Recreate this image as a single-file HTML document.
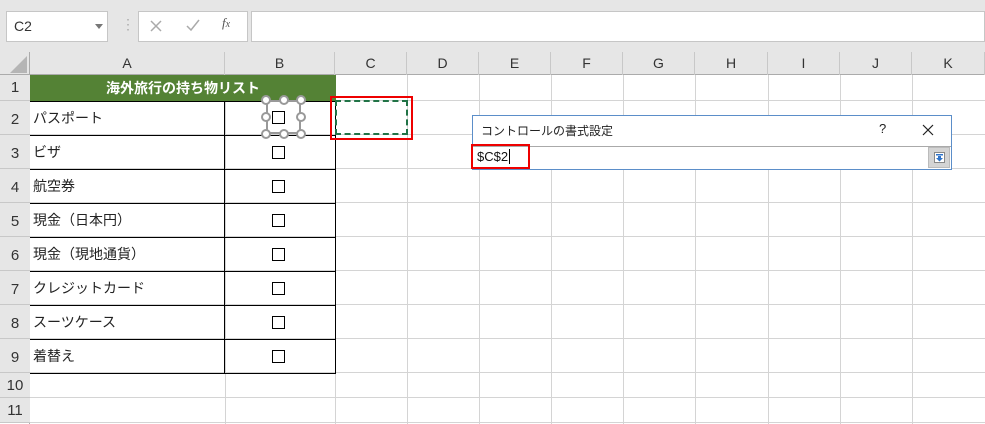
<!DOCTYPE html><html><head><meta charset="utf-8"><style>
*{margin:0;padding:0;box-sizing:border-box}
body{width:985px;height:424px;overflow:hidden;background:#fff;position:relative;font-family:"Liberation Sans","Noto Sans CJK JP",sans-serif;color:#222}
.a{position:absolute}
.vl{position:absolute;top:75px;height:349px;width:1px;background:#d4d4d4}
.hl{position:absolute;left:30px;width:955px;height:1px;background:#d4d4d4}
.ch{position:absolute;top:52px;height:23px;font-size:14px;color:#333;text-align:center;line-height:23px;border-right:1px solid #c8c8c8}
.rh{position:absolute;left:0;width:30px;font-size:15px;color:#333;text-align:center;border-bottom:1px solid #c8c8c8;background:#e6e6e6}
.t{position:absolute;left:33px;font-size:14px;color:#222}
.cb{position:absolute;left:272px;width:13px;height:13px;border:1px solid #000;background:#fff}
.bh{position:absolute;left:30px;width:306px;height:1px;background:#000}
.hd{position:absolute;width:10px;height:10px;border:2px solid #999;border-radius:50%;background:#fff}
</style></head><body>
<div class="a" style="left:0;top:0;width:985px;height:52px;background:#e6e6e6"></div>
<div class="a" style="left:6px;top:11px;width:102px;height:31px;background:#fff;border:1px solid #c6c6c6;font-size:14px;line-height:29px;padding-left:7px;color:#333">C2<span style="position:absolute;left:88px;top:12px;border:4px solid transparent;border-top:5px solid #777"></span></div>
<div class="a" style="left:121px;top:16px;color:#aaa;font-size:14px">⋮</div>
<div class="a" style="left:138px;top:11px;width:110px;height:31px;background:#fff;border:1px solid #c6c6c6"></div>
<svg class="a" style="left:150px;top:20px" width="12" height="12"><path d="M1 1L11 11M11 1L1 11" stroke="#aaa" stroke-width="1.5"/></svg>
<svg class="a" style="left:186px;top:19px" width="14" height="13"><path d="M1 7L5 11L13 1" stroke="#aaa" stroke-width="1.5" fill="none"/></svg>
<div class="a" style="left:222px;top:15px;color:#555;font-size:13px;font-style:italic;font-family:'Liberation Serif',serif">f<span style="font-size:10px">x</span></div>
<div class="a" style="left:251px;top:11px;width:734px;height:31px;background:#fff;border:1px solid #c6c6c6"></div>
<div class="a" style="left:0;top:52px;width:985px;height:23px;background:#e6e6e6;border-bottom:1px solid #ababab"></div>
<div class="a" style="left:10px;top:56px;width:0;height:0;border-left:17px solid transparent;border-bottom:17px solid #b5b5b5"></div>
<div class="ch" style="left:30px;width:195px">A</div><div class="ch" style="left:225px;width:110px">B</div><div class="ch" style="left:335px;width:72px">C</div><div class="ch" style="left:407px;width:72px">D</div><div class="ch" style="left:479px;width:72px">E</div><div class="ch" style="left:551px;width:72px">F</div><div class="ch" style="left:623px;width:72px">G</div><div class="ch" style="left:695px;width:73px">H</div><div class="ch" style="left:768px;width:72px">I</div><div class="ch" style="left:840px;width:72px">J</div><div class="ch" style="left:912px;width:73px">K</div>
<div class="a" style="left:29px;top:52px;width:1px;height:372px;background:#ababab"></div>
<div class="rh" style="top:75px;height:26px;line-height:26px">1</div>
<div class="rh" style="top:101px;height:34px;line-height:38px">2</div>
<div class="rh" style="top:135px;height:34px;line-height:38px">3</div>
<div class="rh" style="top:169px;height:34px;line-height:38px">4</div>
<div class="rh" style="top:203px;height:34px;line-height:38px">5</div>
<div class="rh" style="top:237px;height:34px;line-height:38px">6</div>
<div class="rh" style="top:271px;height:34px;line-height:38px">7</div>
<div class="rh" style="top:305px;height:34px;line-height:38px">8</div>
<div class="rh" style="top:339px;height:34px;line-height:38px">9</div>
<div class="rh" style="top:373px;height:25px;line-height:25px">10</div>
<div class="rh" style="top:398px;height:25px;line-height:25px">11</div>
<div class="vl" style="left:225px"></div><div class="vl" style="left:335px"></div><div class="vl" style="left:407px"></div><div class="vl" style="left:479px"></div><div class="vl" style="left:551px"></div><div class="vl" style="left:623px"></div><div class="vl" style="left:695px"></div><div class="vl" style="left:768px"></div><div class="vl" style="left:840px"></div><div class="vl" style="left:912px"></div>
<div class="hl" style="top:100px"></div><div class="hl" style="top:134px"></div><div class="hl" style="top:168px"></div><div class="hl" style="top:202px"></div><div class="hl" style="top:236px"></div><div class="hl" style="top:270px"></div><div class="hl" style="top:304px"></div><div class="hl" style="top:338px"></div><div class="hl" style="top:372px"></div><div class="hl" style="top:397px"></div><div class="hl" style="top:422px"></div>
<div class="a" style="left:30px;top:75px;width:306px;height:26px;background:#548235;color:#fff;font-weight:bold;font-size:14px;text-align:center;line-height:26px">海外旅行の持ち物リスト</div>
<div class="bh" style="top:101px"></div><div class="bh" style="top:135px"></div><div class="bh" style="top:169px"></div><div class="bh" style="top:203px"></div><div class="bh" style="top:237px"></div><div class="bh" style="top:271px"></div><div class="bh" style="top:305px"></div><div class="bh" style="top:339px"></div><div class="bh" style="top:373px"></div>
<div class="a" style="left:224px;top:101px;width:1px;height:273px;background:#000"></div>
<div class="a" style="left:335px;top:101px;width:1px;height:273px;background:#000"></div>
<div class="t" style="top:108px">パスポート</div><div class="t" style="top:142px">ビザ</div><div class="t" style="top:176px">航空券</div><div class="t" style="top:210px">現金（日本円）</div><div class="t" style="top:244px">現金（現地通貨）</div><div class="t" style="top:278px">クレジットカード</div><div class="t" style="top:312px">スーツケース</div><div class="t" style="top:346px">着替え</div>
<div class="cb" style="top:111px"></div><div class="cb" style="top:146px"></div><div class="cb" style="top:180px"></div><div class="cb" style="top:214px"></div><div class="cb" style="top:248px"></div><div class="cb" style="top:282px"></div><div class="cb" style="top:316px"></div><div class="cb" style="top:350px"></div>
<div class="a" style="left:266px;top:100px;width:35px;height:34px;border:2px solid #999"></div>
<div class="hd" style="left:261px;top:95px"></div><div class="hd" style="left:279px;top:95px"></div><div class="hd" style="left:296px;top:95px"></div>
<div class="hd" style="left:261px;top:112px"></div><div class="hd" style="left:296px;top:112px"></div>
<div class="hd" style="left:261px;top:129px"></div><div class="hd" style="left:279px;top:129px"></div><div class="hd" style="left:296px;top:129px"></div>
<div class="cb" style="top:111px"></div>
<div class="a" style="left:335px;top:100px;width:73px;height:35px;border:2px dashed #217346"></div>
<div class="a" style="left:330px;top:96px;width:83px;height:44px;border:2px solid #e00"></div>
<div class="a" style="left:472px;top:115px;width:480px;height:55px;background:#fff;border:1px solid #5b8ec9"></div>
<div class="a" style="left:481px;top:122px;font-size:12px;color:#222">コントロールの書式設定</div>
<div class="a" style="left:879px;top:121px;font-size:13px;color:#222">?</div>
<svg class="a" style="left:922px;top:124px" width="12" height="12"><path d="M1 1L11 11M11 1L1 11" stroke="#222" stroke-width="1.2"/></svg>
<div class="a" style="left:473px;top:146px;width:478px;height:23px;border-top:1px solid #aaa;background:#fff"></div>
<div class="a" style="left:477px;top:149px;font-size:13px;color:#111">$C$2<span style="border-left:1px solid #000;margin-left:1px"></span></div>
<div class="a" style="left:928px;top:147px;width:22px;height:21px;background:#d4d4d4;border:1px solid #bbb"><svg style="position:absolute;left:5px;top:4px" width="11" height="11"><rect x="0.5" y="0.5" width="10" height="10" fill="#fff" stroke="#888"/><rect x="2" y="2" width="7" height="1.5" fill="#2f73c9"/><path d="M4 4H7V6H9L5.5 9.5L2 6H4Z" fill="#2f73c9"/></svg></div>
<div class="a" style="left:471px;top:144px;width:59px;height:25px;border:2px solid #e00"></div>
</body></html>
